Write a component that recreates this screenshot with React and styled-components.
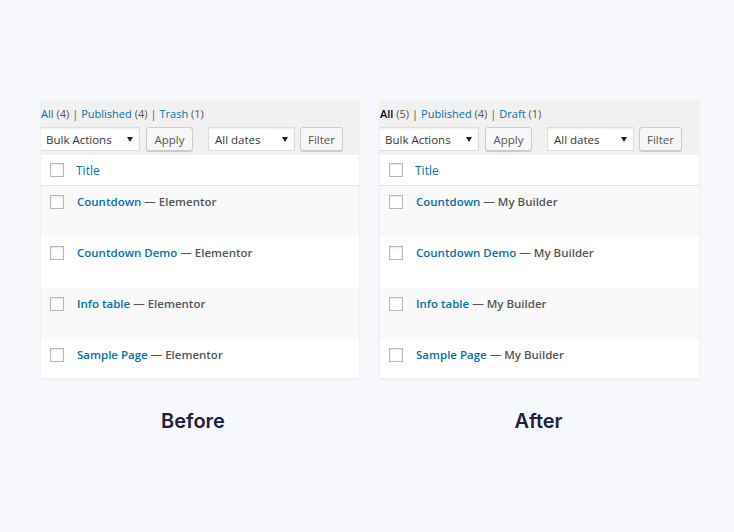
import React from "react";
import styled, { createGlobalStyle } from "styled-components";

const Global = createGlobalStyle`
  html, body { margin: 0; padding: 0; background: #f7f8fc; }
  body { font-family: "Open Sans", "Noto Sans", sans-serif; }
`;

const Page = styled.div`
  width: 734px;
  height: 532px;
  box-sizing: border-box;
  padding: 100px 0 0 41px;
  display: flex;
  gap: 21px;
`;

const Column = styled.div`
  width: ${(p) => p.$w}px;
  display: flex;
  flex-direction: column;
  align-items: center;
`;

const Panel = styled.div`
  width: 100%;
  background: #f1f1f1;
  box-shadow: 0 1px 3px rgba(0, 0, 0, 0.08);
`;

const Top = styled.div`
  padding: 6px 0 4px 0;
`;

const Status = styled.div`
  font-size: 11px;
  line-height: 15px;
  color: #555;
  height: 15px;
  white-space: nowrap;
`;

const StatusLink = styled.span`
  color: ${(p) => (p.$current ? "#000" : "#0073aa")};
  font-weight: ${(p) => (p.$current ? 600 : 400)};
`;

const Count = styled.span`
  color: #555;
  font-weight: 400;
`;

const Sep = styled.span`
  color: #555;
  margin: 0 3px;
`;

const Controls = styled.div`
  display: flex;
  align-items: center;
  margin-top: 6px;
  height: 24px;
`;

const Select = styled.div`
  width: ${(p) => p.$w}px;
  height: 24px;
  box-sizing: border-box;
  background: #fff;
  border: 1px solid #ddd;
  border-left: ${(p) => (p.$flushLeft ? "none" : "1px solid #ddd")};
  box-shadow: inset 0 1px 2px rgba(0, 0, 0, 0.07);
  display: flex;
  align-items: center;
  justify-content: space-between;
  padding: 0 6px 0 ${(p) => (p.$flushLeft ? 5 : 6)}px;
  font-size: 11.5px;
  color: #32373c;
  margin-left: ${(p) => p.$ml || 0}px;
`;

const Arrow = styled.span`
  width: 0;
  height: 0;
  border-left: 3px solid transparent;
  border-right: 3px solid transparent;
  border-top: 5px solid #222;
`;

const Button = styled.div`
  width: ${(p) => p.$w}px;
  height: 24px;
  box-sizing: border-box;
  margin-left: ${(p) => p.$ml}px;
  background: #f7f7f7;
  border: 1px solid #ccc;
  border-radius: 3px;
  box-shadow: 0 1px 0 #ccc;
  display: flex;
  align-items: center;
  justify-content: center;
  font-size: 11.5px;
  color: #555;
`;

const Table = styled.div`
  background: #fff;
`;

const HeadRow = styled.div`
  height: 31px;
  display: flex;
  align-items: center;
  border-bottom: 1px solid #e1e1e1;
  box-sizing: border-box;
`;

const Row = styled.div`
  height: ${(p) => p.$h}px;
  background: ${(p) => (p.$alt ? "#f9f9f9" : "#fff")};
  display: flex;
  align-items: flex-start;
  padding-top: 9px;
  box-sizing: border-box;
`;

const Check = styled.span`
  width: 14px;
  height: 14px;
  box-sizing: border-box;
  border: 1px solid #b4b9be;
  background: #fff;
  box-shadow: inset 0 1px 2px rgba(0, 0, 0, 0.1);
  margin-left: 9px;
  flex: none;
`;

const HeadLabel = styled.span`
  margin-left: 12px;
  font-size: 12px;
  color: #0073aa;
`;

const RowTitle = styled.span`
  margin-left: 13px;
  font-size: 11.5px;
  line-height: 14px;
  font-weight: 600;
  color: #555;
  white-space: nowrap;
`;

const TitleLink = styled.span`
  color: #0073aa;
`;

const Caption = styled.div`
  margin-top: 31px;
  margin-right: ${(p) => p.$shift || 0}px;
  font-family: "Inter", "Lato", sans-serif;
  font-weight: 600;
  font-size: 20px;
  color: #1b213f;
`;

const items = ["Countdown", "Countdown Demo", "Info table", "Sample Page"];

function ListPanel({ status, builder, w, caption, shift }) {
  return (
    <Column $w={w}>
      <Panel>
        <Top>
          <Status>
            {status.map((s, i) => (
              <React.Fragment key={s.label}>
                {i > 0 && <Sep>|</Sep>}
                <StatusLink $current={s.current}>
                  {s.label} <Count>({s.n})</Count>
                </StatusLink>
              </React.Fragment>
            ))}
          </Status>
          <Controls>
            <Select $w={99} $flushLeft>
              Bulk Actions <Arrow />
            </Select>
            <Button $ml={6} $w={47}>Apply</Button>
            <Select $w={87} $ml={15}>
              All dates <Arrow />
            </Select>
            <Button $ml={5} $w={43}>Filter</Button>
          </Controls>
        </Top>
        <Table>
          <HeadRow>
            <Check />
            <HeadLabel>Title</HeadLabel>
          </HeadRow>
          {items.map((t, i) => (
            <Row key={t} $alt={i % 2 === 0} $h={i === 3 ? 39 : 51}>
              <Check />
              <RowTitle>
                <TitleLink>{t}</TitleLink> — {builder}
              </RowTitle>
            </Row>
          ))}
        </Table>
      </Panel>
      <Caption $shift={shift}>{caption}</Caption>
    </Column>
  );
}

export default function App() {
  return (
    <>
      <Global />
      <Page>
        <ListPanel
          w={318}
          caption="Before"
          shift={14}
          builder="Elementor"
          status={[
            { label: "All", n: 4 },
            { label: "Published", n: 4 },
            { label: "Trash", n: 1 },
          ]}
        />
        <ListPanel
          w={319}
          caption="After"
          shift={2}
          builder="My Builder"
          status={[
            { label: "All", n: 5, current: true },
            { label: "Published", n: 4 },
            { label: "Draft", n: 1 },
          ]}
        />
      </Page>
    </>
  );
}
